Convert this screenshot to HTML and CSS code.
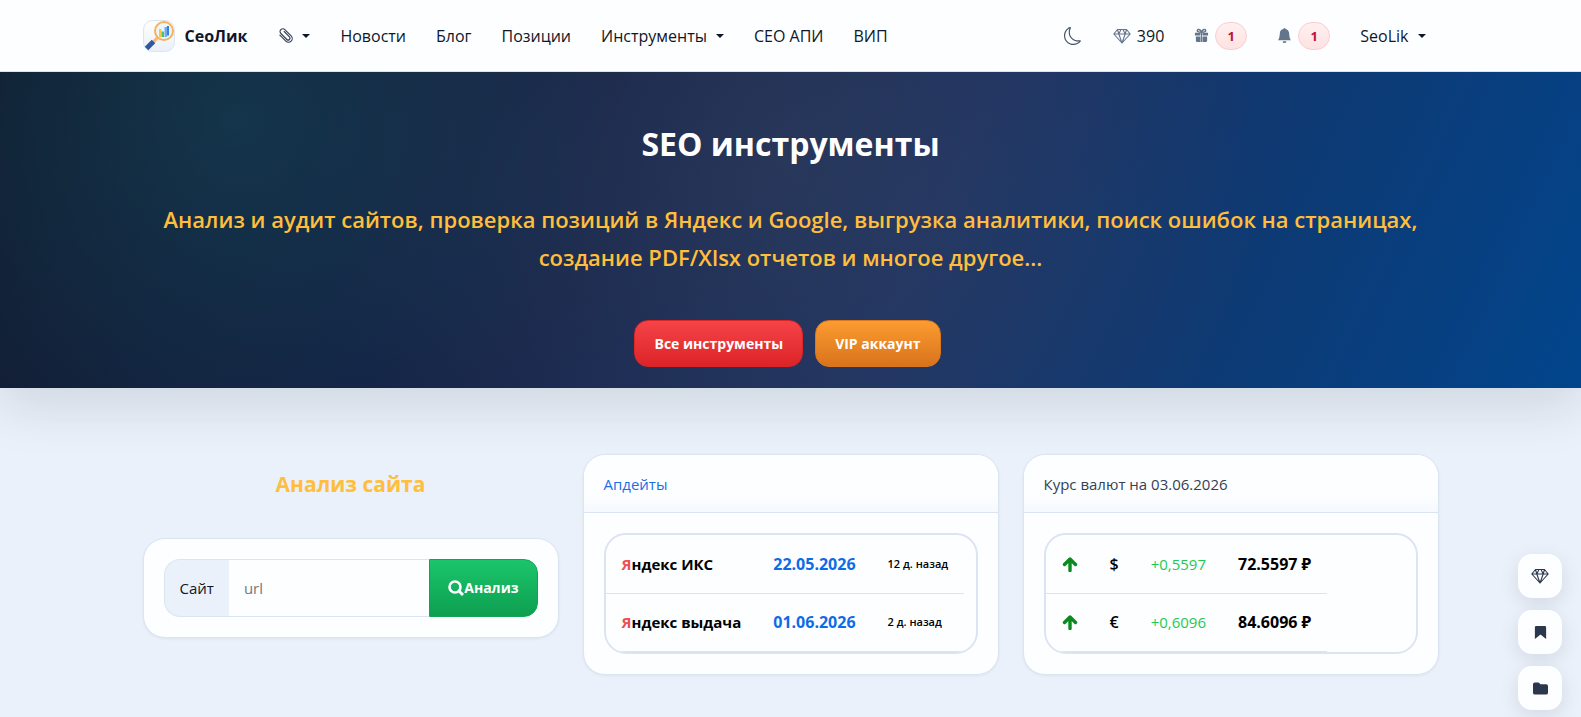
FILE: index.html
```
<!DOCTYPE html>
<html lang="ru">
<head>
    <meta charset="UTF-8">
    <meta name="viewport" content="width=device-width, initial-scale=1.0">
    <title>SEO инструменты - СеоЛик</title>
    <link rel="stylesheet" href="styles.css">
</head>
<body>
    <svg class="sprite" aria-hidden="true">
        <symbol id="gem" viewBox="0 0 18 16">
            <path d="M4.500 1.500h9l3.700 4.500L9 15 .8 6zM.8 6h16.400M4.500 1.500 5.800 6 9 15l3.200-9 1.300-4.500M5.800 6 8 1.500M12.200 6 10 1.500" fill="none" stroke="currentColor" stroke-width="1.100" stroke-linejoin="round" />
        </symbol>
        <symbol id="arrow" viewBox="0 0 16 16">
            <path d="M8 14.500V3.500M2.500 8.500 8 3l5.500 5.500" fill="none" stroke="currentColor" stroke-width="3.400" stroke-linecap="round" stroke-linejoin="round" />
        </symbol>
    </svg>

    <header class="navbar">
        <nav class="container nav">
            <a class="brand" href="#">
                <svg class="logo" viewBox="0 0 32 32" aria-hidden="true">
                    <defs>
                        <linearGradient id="tile" x1="0" y1="0" x2="0" y2="1">
                            <stop offset="0" stop-color="#fff" />
                            <stop offset="1" stop-color="#eaf0f9" />
                        </linearGradient>
                    </defs>
                    <rect x=".5" y=".5" width="31" height="31" rx="9" fill="url(#tile)" stroke="#dbe5f2" />
                    <circle cx="21" cy="11" r="8" fill="#e9f6fb" />
                    <path d="M16 9h2.500v8H16z" fill="#f9c74f" />
                    <path d="M18.500 11.500H21V17h-2.500z" fill="#58bd6b" />
                    <path d="M21.500 7h2.500v10h-2.500z" fill="#6aaef5" />
                    <path d="M24 6h2v9.500h-2z" fill="#3b7ddd" />
                    <circle cx="21" cy="11" r="9" fill="none" stroke="#fbb055" stroke-width="2" />
                    <path d="m14.500 17.500-4 4.500" stroke="#fbb868" stroke-width="3" />
                    <path d="m10.500 21.500-7 7" stroke="#2d5a9e" stroke-width="5" />
                </svg>
                СеоЛик
            </a>
            <ul class="menu">
                <li>
                    <a class="dropdown" href="#" aria-label="Закладки">
                        <svg class="icon clip" viewBox="0 0 16 16" aria-hidden="true">
                            <path d="M4 3.500v9a4 4 0 0 0 8 0V3a3 3 0 0 0-6 0v9a2 2 0 0 0 4 0V4" fill="none" stroke="currentColor" stroke-width="1.200" stroke-linecap="round" transform="rotate(-45 8 8)" />
                        </svg>
                    </a>
                </li>
                <li><a href="#">Новости</a></li>
                <li><a href="#">Блог</a></li>
                <li><a href="#">Позиции</a></li>
                <li><a class="dropdown" href="#">Инструменты</a></li>
                <li><a href="#">СЕО АПИ</a></li>
                <li><a href="#">ВИП</a></li>
            </ul>
            <ul class="menu menu-user">
                <li>
                    <button class="theme" type="button" aria-label="Тема">
                        <svg viewBox="0 0 16 16" aria-hidden="true">
                            <path d="M6 .278a.77.77 0 0 1 .08.858 7.200 7.200 0 0 0-.878 3.460c0 4.021 3.278 7.277 7.318 7.277q.792-.001 1.533-.160a.79.79 0 0 1 .810.316.73.73 0 0 1-.031.893A8.350 8.350 0 0 1 8.344 16C3.734 16 0 12.286 0 7.710 0 4.266 2.114 1.312 5.124.060A.75.75 0 0 1 6 .278M4.858 1.311A7.270 7.270 0 0 0 1.025 7.710c0 4.020 3.279 7.276 7.319 7.276a7.320 7.320 0 0 0 5.205-2.162q-.506.063-1.029.063c-4.610 0-8.343-3.714-8.343-8.290 0-1.167.242-2.278.681-3.286" />
                        </svg>
                    </button>
                </li>
                <li><a href="#"><svg class="icon gem" aria-hidden="true"><use href="#gem" /></svg>390</a></li>
                <li>
                    <a href="#" aria-label="Подарки">
                        <svg class="icon" viewBox="0 0 16 16" aria-hidden="true">
                            <path d="M1 5h6v3H1zM9 5h6v3H9zM2 9h5v6H3.500A1.500 1.500 0 0 1 2 13.500zM9 9h5v4.500a1.500 1.500 0 0 1-1.500 1.500H9zM7.500 5h1v10h-1z" />
                            <path d="M8 4.500C7 1 3.500.7 3.500 3c0 1.500 2 1.500 4.500 1.500C10.500 4.500 12.500 4.500 12.500 3 12.500.7 9 1 8 4.500z" fill="none" stroke="currentColor" stroke-width="1.500" />
                        </svg>
                        <span class="badge">1</span>
                    </a>
                </li>
                <li>
                    <a href="#" aria-label="Уведомления">
                        <svg class="icon" viewBox="0 0 16 16" aria-hidden="true">
                            <path d="M8 16a2 2 0 0 0 2-2H6a2 2 0 0 0 2 2m.995-14.901a1 1 0 1 0-1.990 0A5 5 0 0 0 3 6c0 1.098-.5 6-2 7h14c-1.500-1-2-5.902-2-7 0-2.420-1.720-4.440-4.005-4.901" />
                        </svg>
                        <span class="badge">1</span>
                    </a>
                </li>
                <li><a class="dropdown" href="#">SeoLik</a></li>
            </ul>
        </nav>
    </header>

    <section class="hero">
        <div class="container">
            <h1>SEO инструменты</h1>
            <p>Анализ и аудит сайтов, проверка позиций в Яндекс и Google, выгрузка аналитики, поиск ошибок на страницах, создание PDF/Xlsx отчетов и многое другое...</p>
            <div class="hero-buttons">
                <a class="btn btn-red" href="#">Все инструменты</a>
                <a class="btn btn-orange" href="#">VIP аккаунт</a>
            </div>
        </div>
    </section>

    <main class="container cards">
        <section>
            <h2>Анализ сайта</h2>
            <div class="card">
                <form class="card-body search">
                    <label for="url">Сайт</label>
                    <input type="text" id="url" name="url" placeholder="url">
                    <button class="btn btn-green" type="submit">
                        <svg viewBox="0 0 16 16" aria-hidden="true">
                            <circle cx="7" cy="7" r="5.500" fill="none" stroke="currentColor" stroke-width="2.600" />
                            <path d="m11 11 4 4" stroke="currentColor" stroke-width="3" />
                        </svg>Анализ
                    </button>
                </form>
            </div>
        </section>

        <section class="card">
            <div class="card-header"><a href="#">Апдейты</a></div>
            <div class="card-body">
                <div class="table-box">
                    <table class="updates">
                        <tr>
                            <td><span class="ya">Я</span>ндекс ИКС</td>
                            <td class="date">22.05.2026</td>
                            <td class="ago">12 д. назад</td>
                        </tr>
                        <tr>
                            <td><span class="ya">Я</span>ндекс выдача</td>
                            <td class="date">01.06.2026</td>
                            <td class="ago">2 д. назад</td>
                        </tr>
                    </table>
                </div>
            </div>
        </section>

        <section class="card">
            <div class="card-header">Курс валют на 03.06.2026</div>
            <div class="card-body">
                <div class="table-box">
                    <table class="rates">
                        <tr>
                            <td><svg class="up" aria-hidden="true"><use href="#arrow" /></svg></td>
                            <td class="sign">$</td>
                            <td class="diff">+0,5597</td>
                            <td class="rate">72.5597 ₽</td>
                        </tr>
                        <tr>
                            <td><svg class="up" aria-hidden="true"><use href="#arrow" /></svg></td>
                            <td class="sign">€</td>
                            <td class="diff">+0,6096</td>
                            <td class="rate">84.6096 ₽</td>
                        </tr>
                    </table>
                </div>
            </div>
        </section>
    </main>

    <div class="float-menu">
        <a href="#" aria-label="ВИП">
            <svg class="float-gem" aria-hidden="true"><use href="#gem" /></svg>
        </a>
        <a href="#" aria-label="В закладки">
            <svg viewBox="0 0 16 16" aria-hidden="true"><path d="M2 2.500A1.500 1.500 0 0 1 3.500 1h9A1.500 1.500 0 0 1 14 2.500V15l-6-5-6 5z" /></svg>
        </a>
        <a href="#" aria-label="Проекты">
            <svg viewBox="0 0 16 16" aria-hidden="true"><path d="M0 3.500A2 2 0 0 1 2 1.500h4l2 2h6a2 2 0 0 1 2 2v7a2 2 0 0 1-2 2H2a2 2 0 0 1-2-2z" /></svg>
        </a>
    </div>
</body>
</html>
```
FILE: styles.css
```
* {
    box-sizing: border-box;
}
body {
    margin: 0;
    font-family: "Open Sans", "Noto Sans", sans-serif;
    font-size: 15px;
    line-height: 24px;
    color: #0f172a;
    background: #eaf1fa;
}
a {
    color: inherit;
    text-decoration: none;
}
button, input {
    font: inherit;
}
svg {
    fill: currentColor;
    flex: none;
}
.sprite {
    display: none;
}
.container {
    max-width: 1320px;
    margin: 0 auto;
    padding: 0 12px;
}

/* navbar */
.navbar {
    position: relative;
    z-index: 1;
    background: #fdfeff;
    border-bottom: 1px solid #dbe5f2;
}
.nav {
    display: flex;
    align-items: center;
    height: 71px;
}
.brand {
    display: flex;
    align-items: center;
    gap: 10px;
    margin-right: 16px;
    font-size: 16px;
    font-weight: 700;
}
.logo {
    width: 32px;
    height: 32px;
}
.menu {
    display: flex;
    align-items: center;
    margin: 0;
    padding: 0;
    font-size: 16px;
    list-style: none;
}
.menu a {
    display: flex;
    align-items: center;
    gap: 6px;
    padding: 8px 15px;
}
.menu-user {
    margin-left: auto;
}
.menu-user li:last-child a {
    padding-right: 13px;
}
.dropdown::after {
    content: "";
    margin-left: 3px;
    border-top: 4px solid;
    border-left: 4px solid transparent;
    border-right: 4px solid transparent;
}
.icon {
    width: 15px;
    height: 15px;
    color: #64748b;
}
.clip {
    color: #334155;
}
.gem {
    width: 18px;
    height: 16px;
}
.theme {
    display: flex;
    padding: 8px 16px;
    border: 0;
    background: none;
    color: #475569;
}
.theme svg {
    width: 18px;
    height: 18px;
}
.badge {
    width: 32px;
    height: 28px;
    border: 1px solid #fbcdd1;
    border-radius: 14px;
    background: linear-gradient(#fff0f0, #fee2e2);
    color: #be123c;
    font-size: 13px;
    font-weight: 700;
    line-height: 26px;
    text-align: center;
}

/* hero */
.hero {
    position: relative;
    padding: 48px 0 21px;
    text-align: center;
    color: #fff;
    background:
        radial-gradient(circle at 15% 15%, rgba(22, 100, 110, 0.32), transparent 380px),
        radial-gradient(circle at 50% 30%, rgba(80, 90, 100, 0.26), transparent 480px),
        linear-gradient(115deg, #111c30 0%, #142144 30%, #1d3162 58%, #0d3a74 78%, #02458c 100%);
    box-shadow: 0 18px 50px rgba(15, 23, 42, 0.12);
}
.hero h1 {
    margin: 0 0 32px;
    font-size: 32px;
    font-weight: 700;
    line-height: 48px;
}
.hero p {
    margin: 0 0 44px;
    font-size: 22px;
    font-weight: 600;
    line-height: 38px;
    color: #ffbe3b;
}
.hero-buttons {
    display: flex;
    justify-content: center;
    gap: 12px;
    margin-right: 6px;
}
.btn {
    display: flex;
    align-items: center;
    justify-content: center;
    min-height: 47px;
    padding: 0 19px;
    border: 1px solid;
    border-radius: 14px;
    color: #fff;
    font-size: 14px;
    font-weight: 700;
}
.btn-red {
    border-color: #dc2626;
    background: linear-gradient(#f54347, #dc2428);
}
.btn-orange {
    border-color: #d9771c;
    background: linear-gradient(#fb9c30, #d9731c);
}
.btn-green {
    border-color: #0fa653;
    background: linear-gradient(#1bc56b, #0d9f50);
}

/* cards */
.cards {
    display: grid;
    grid-template-columns: repeat(3, minmax(0, 1fr));
    gap: 24px;
    align-items: start;
    padding-top: 66px;
    padding-bottom: 66px;
}
.cards h2 {
    margin: 16px 0 40px;
    font-size: 21px;
    font-weight: 700;
    line-height: 28px;
    text-align: center;
    color: #ffbe3b;
}
.card {
    border: 1px solid #dbe5f2;
    border-radius: 22px;
    background: #fdfeff;
    box-shadow: 0 1px 3px rgba(15, 23, 42, 0.06);
}
.card-header {
    padding: 17px 20px 16px;
    border-bottom: 1px solid #dbe5f2;
    border-radius: 22px 22px 0 0;
    background: linear-gradient(#fdfeff 70%, #f5f8fe);
    color: #334155;
}
.card-header a {
    color: #1a6fe8;
}
.card-body {
    padding: 20px;
}
.search {
    display: flex;
}
.search label {
    padding: 16px 15px;
    border: 1px solid #dbe5f2;
    border-right: 0;
    border-radius: 16px 0 0 16px;
    background: #eaf1fa;
}
.search input {
    flex: 1;
    min-width: 0;
    height: 58px;
    padding: 0 15px;
    border: 1px solid #dbe5f2;
    border-width: 1px 0;
    background: #fdfeff;
}
.search input::placeholder {
    color: #75787d;
}
.search button {
    padding: 0 18px;
    border-radius: 0 14px 14px 0;
}
.search svg {
    width: 16px;
    height: 16px;
}
.table-box {
    overflow: hidden;
    border: 2px solid #dbe5f2;
    border-radius: 22px;
}
table {
    border-collapse: collapse;
    color: #000;
    font-weight: 700;
}
td {
    height: 58px;
    padding: 0 16px;
    border-bottom: 1px solid #dbe5f2;
    white-space: nowrap;
}
.ya {
    color: #ef4f4f;
}
.updates .date {
    color: #0d6be8;
    font-size: 16px;
}
.updates .ago {
    font-size: 11px;
    font-weight: 600;
}
.up {
    display: block;
    width: 16px;
    height: 16px;
    color: #0a8a1f;
}
.rates .sign {
    font-size: 16px;
    font-weight: 600;
}
.rates .diff {
    color: #1fc950;
    font-weight: 400;
}
.rates .rate {
    font-size: 16px;
}

/* floating buttons */
.float-menu {
    position: fixed;
    right: 19px;
    bottom: 7px;
    display: flex;
    flex-direction: column;
    gap: 12px;
}
.float-menu a {
    display: flex;
    align-items: center;
    justify-content: center;
    width: 44px;
    height: 44px;
    border-radius: 14px;
    background: #fdfeff;
    color: #2b374c;
    box-shadow: 0 6px 20px rgba(15, 23, 42, 0.1);
}
.float-menu svg {
    width: 15px;
    height: 15px;
}
.float-menu .float-gem {
    width: 18px;
    height: 16px;
}
```
